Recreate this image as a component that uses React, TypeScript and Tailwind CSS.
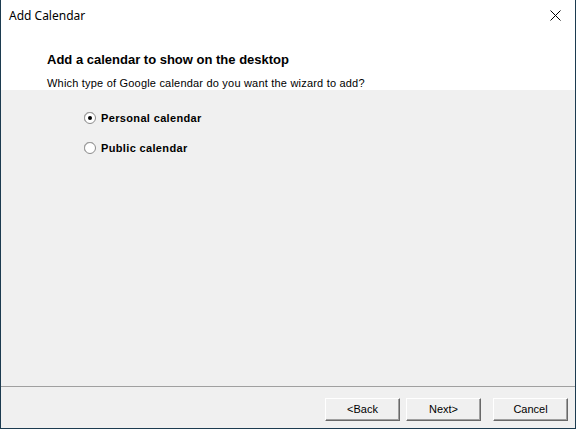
import React, { useState } from 'react';

const Radio = ({ checked }: { checked: boolean }) => (
  <svg width="12" height="12" viewBox="0 0 12 12" className="shrink-0">
    <circle cx="6" cy="6" r="5.5" fill="#ffffff" stroke="#8a8a8a" />
    <path d="M1.8 9.5A5 5 0 0 1 9.5 1.8" fill="none" stroke="#a0a0a0" strokeWidth="1" />
    {checked && <circle cx="6" cy="6" r="2" fill="#000000" />}
  </svg>
);

const WinButton = ({ label, className = '' }: { label: string; className?: string }) => (
  <button
    className={`h-[23px] w-[75px] bg-[#f0f0f0] border border-t-white border-l-white border-b-[#696969] border-r-[#696969] shadow-[inset_-1px_-1px_0_#a0a0a0] text-[11px] text-black font-['Liberation_Sans',Arial,sans-serif] ${className}`}
  >
    {label}
  </button>
);

export default function App() {
  const [choice, setChoice] = useState<'personal' | 'public'>('personal');

  const options = [
    { id: 'personal' as const, label: 'Personal calendar' },
    { id: 'public' as const, label: 'Public calendar' },
  ];

  return (
    <div className="w-[576px] h-[429px] flex flex-col border-l border-r border-b border-[#1c3b50] bg-[#f0f0f0] font-['Liberation_Sans',Arial,sans-serif] text-black overflow-hidden">
      {/* title bar */}
      <div className="h-[31px] shrink-0 bg-white flex items-center justify-between pl-[8px] pr-[9px]">
        <span className="text-[12px] font-['Noto_Sans',sans-serif] leading-none">Add Calendar</span>
        <svg width="11" height="11" viewBox="0 0 11 11" className="mr-[5px]">
          <path d="M0.5 0.5L10.5 10.5M10.5 0.5L0.5 10.5" stroke="#000" strokeWidth="1" />
        </svg>
      </div>

      {/* header */}
      <div className="h-[59px] shrink-0 bg-white pl-[46px] pt-[21px]">
        <h1 className="text-[13px] font-bold leading-[16px]">Add a calendar to show on the desktop</h1>
        <p className="mt-[9px] text-[11px] leading-[12px] tracking-[0.2px]">Which type of Google calendar do you want the wizard to add?</p>
      </div>

      {/* body */}
      <div className="flex-1 flex flex-col">
        <div className="pl-[83px] pt-[20px] flex flex-col gap-[14px]">
          {options.map((o) => (
            <label
              key={o.id}
              className="flex items-center gap-[5px] h-[16px] cursor-default"
              onClick={() => setChoice(o.id)}
            >
              <Radio checked={choice === o.id} />
              <span className="text-[11px] font-bold tracking-[0.35px]">{o.label}</span>
            </label>
          ))}
        </div>

        <div className="mt-auto">
          <div className="h-px bg-[#a0a0a0]" />
          <div className="flex justify-end pt-[11px] pb-[7px] pr-[7px]">
            <WinButton label="<Back" />
            <WinButton label="Next>" className="ml-[6px]" />
            <WinButton label="Cancel" className="ml-[12px]" />
          </div>
        </div>
      </div>
    </div>
  );
}
